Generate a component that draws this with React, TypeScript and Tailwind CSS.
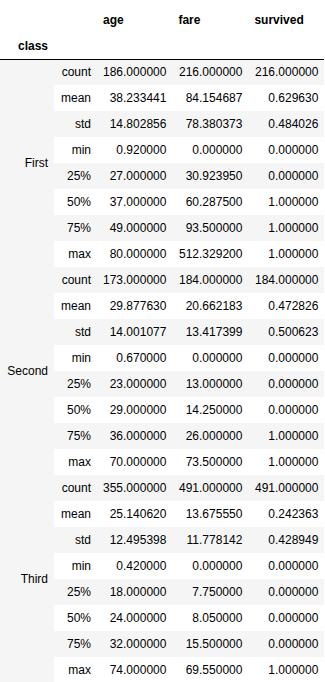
const groups = [
  {
    name: "First",
    rows: [
      ["count", "186.000000", "216.000000", "216.000000"],
      ["mean", "38.233441", "84.154687", "0.629630"],
      ["std", "14.802856", "78.380373", "0.484026"],
      ["min", "0.920000", "0.000000", "0.000000"],
      ["25%", "27.000000", "30.923950", "0.000000"],
      ["50%", "37.000000", "60.287500", "1.000000"],
      ["75%", "49.000000", "93.500000", "1.000000"],
      ["max", "80.000000", "512.329200", "1.000000"],
    ],
  },
  {
    name: "Second",
    rows: [
      ["count", "173.000000", "184.000000", "184.000000"],
      ["mean", "29.877630", "20.662183", "0.472826"],
      ["std", "14.001077", "13.417399", "0.500623"],
      ["min", "0.670000", "0.000000", "0.000000"],
      ["25%", "23.000000", "13.000000", "0.000000"],
      ["50%", "29.000000", "14.250000", "0.000000"],
      ["75%", "36.000000", "26.000000", "1.000000"],
      ["max", "70.000000", "73.500000", "1.000000"],
    ],
  },
  {
    name: "Third",
    rows: [
      ["count", "355.000000", "491.000000", "491.000000"],
      ["mean", "25.140620", "13.675550", "0.242363"],
      ["std", "12.495398", "11.778142", "0.428949"],
      ["min", "0.420000", "0.000000", "0.000000"],
      ["25%", "18.000000", "7.750000", "0.000000"],
      ["50%", "24.000000", "8.050000", "0.000000"],
      ["75%", "32.000000", "15.500000", "0.000000"],
      ["max", "74.000000", "69.550000", "1.000000"],
    ],
  },
];

const cell = "h-[26px] px-[6px] py-0 leading-[14px] whitespace-nowrap";

export default function App() {
  return (
    <div className="min-h-screen bg-white pt-[7px] text-[12px] text-black [font-family:'Liberation_Sans',Arial,sans-serif]">
      <table className="table-fixed border-collapse">
        <colgroup>
          <col className="w-[54px]" />
          <col className="w-[43px]" />
          <col className="w-[75px]" />
          <col className="w-[76px]" />
          <col className="w-[76px]" />
        </colgroup>
        <thead className="border-b border-black">
          <tr>
            <th className={cell} />
            <th className={cell} />
            <th className={`${cell} text-left font-bold`}>age</th>
            <th className={`${cell} text-left font-bold`}>fare</th>
            <th className={`${cell} text-left font-bold`}>survived</th>
          </tr>
          <tr>
            <th className={`${cell} text-right font-bold`}>class</th>
            <th className={cell} />
            <th className={cell} />
            <th className={cell} />
            <th className={cell} />
          </tr>
        </thead>
        <tbody>
          {groups.map((g) =>
            g.rows.map((r, i) => (
              <tr key={g.name + r[0]} className={i % 2 === 0 ? "bg-[#f5f5f5]" : "bg-white"}>
                {i === 0 && (
                  <th rowSpan={8} className={`${cell} bg-[#f5f5f5] text-right align-middle font-normal`}>
                    {g.name}
                  </th>
                )}
                <th className={`${cell} text-right font-normal`}>{r[0]}</th>
                <td className={`${cell} text-right`}>{r[1]}</td>
                <td className={`${cell} text-right`}>{r[2]}</td>
                <td className={`${cell} text-right`}>{r[3]}</td>
              </tr>
            ))
          )}
        </tbody>
      </table>
    </div>
  );
}
